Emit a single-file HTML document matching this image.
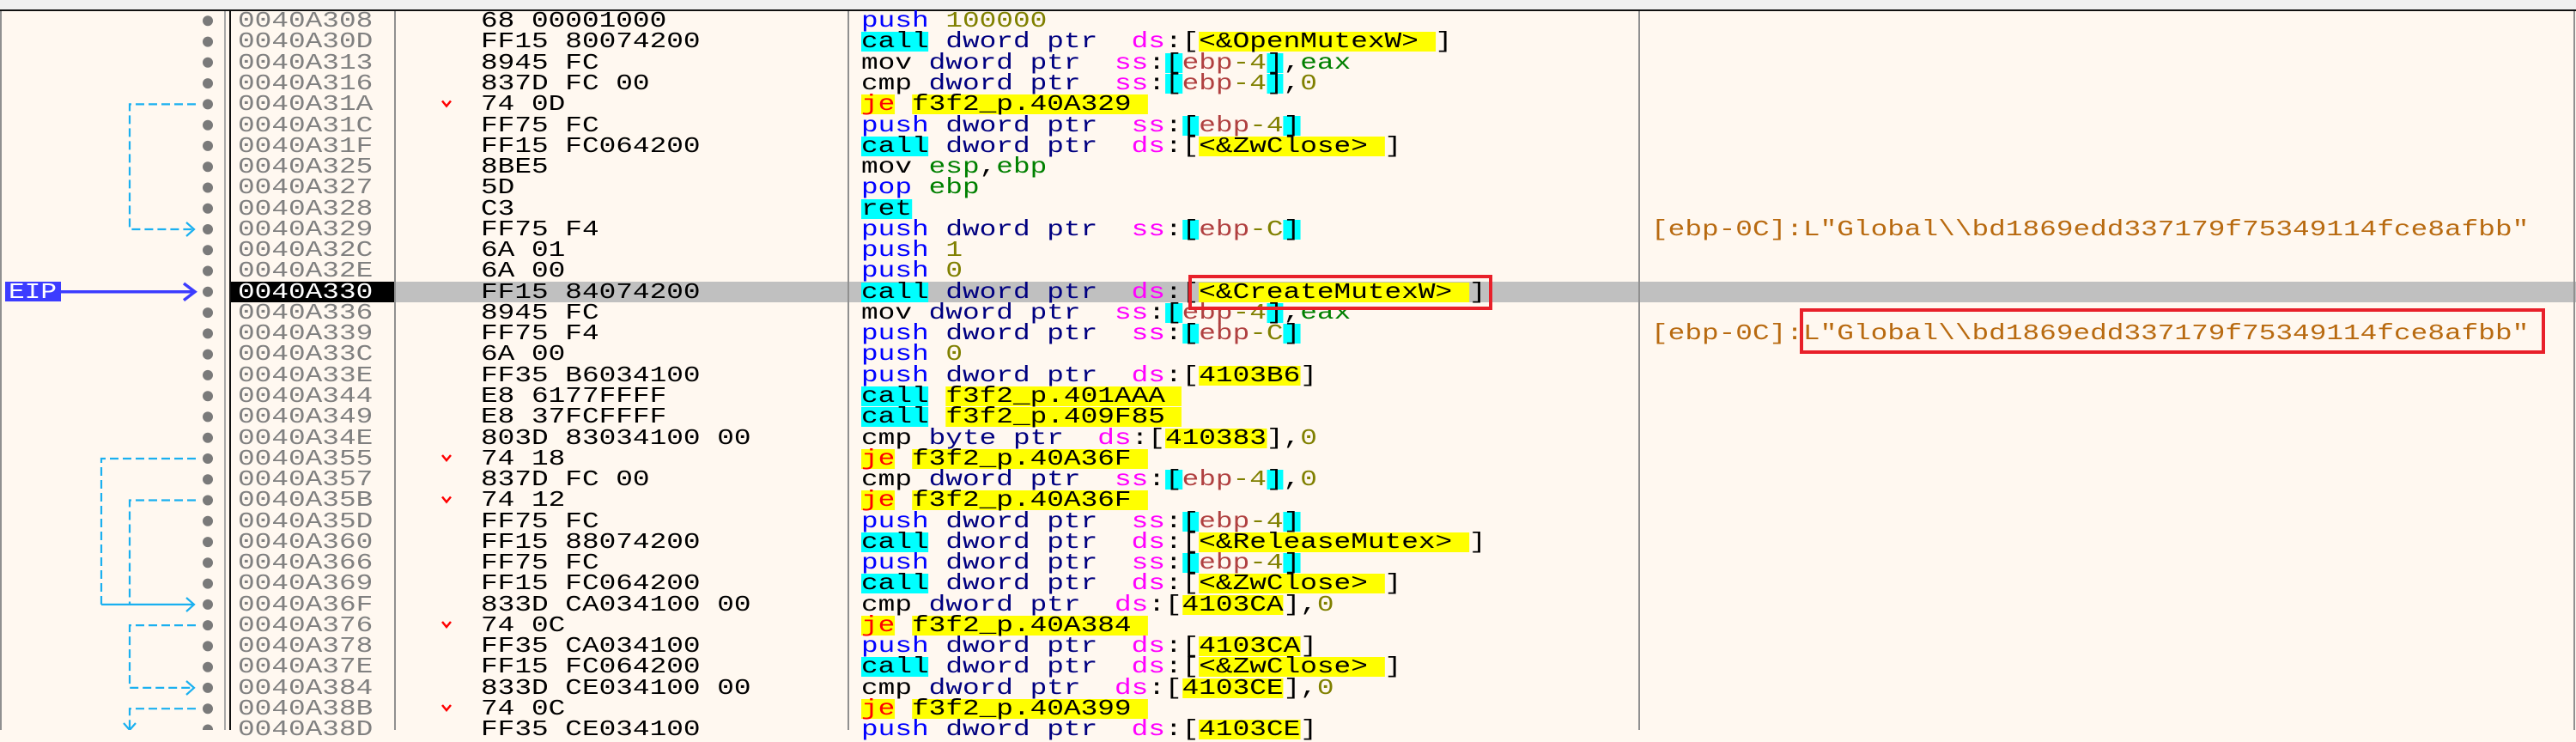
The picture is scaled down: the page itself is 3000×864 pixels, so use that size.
<!DOCTYPE html>
<html><head><meta charset="utf-8"><style>
html,body{margin:0;padding:0;width:3000px;height:850px;overflow:hidden;background:#fff8f0;}
#top{position:absolute;left:0;top:0;width:3000px;height:11px;background:#f0f0f0;border-bottom:2px solid #111;}
.rows{position:absolute;left:0;top:12.2px;width:3000px;}
.r{position:relative;height:24.27px;width:3000px;}
.r span.a,.r span.b,.r span.m,.r span.c{position:absolute;top:0;white-space:pre;font-family:"Liberation Mono",monospace;font-size:26px;line-height:24.27px;transform:scaleX(1.26);transform-origin:0 0;}
.a{left:277px;color:#808080;}
.b{left:560px;color:#000;}
.m{left:1003px;color:#000;}
.c{left:1923px;color:#b86a10;}
.cy{background:#00ffff;display:inline-block;height:23px;vertical-align:top;margin-top:1px;line-height:22px;}
.y{background:#ffff00;display:inline-block;height:23px;vertical-align:top;margin-top:1px;line-height:22px;}
.bl{color:#0000ff}.n{color:#000080}.mg{color:#ff00ff}.e{color:#b04040}.o{color:#808000}.g{color:#008000}.rd{color:#ff0000}
svg{position:absolute;left:0;top:0;}
</style></head><body>
<div id="top"></div>
<div style="position:absolute;left:460px;top:327.7px;width:2540px;height:24.3px;background:#c0c0c0"></div>
<div style="position:absolute;left:269px;top:327.7px;width:191px;height:24.3px;background:#000"></div>
<div class="rows">
<div class="r"><span class="a">0040A308</span><span class="b">68 00001000</span><span class="m"><span class="bl">push</span> <span class="o">100000</span></span></div>
<div class="r"><span class="a">0040A30D</span><span class="b">FF15 80074200</span><span class="m"><span class="cy">call</span> <span class="n">dword ptr</span>  <span class="mg">ds</span>:[<span class="y">&lt;&amp;OpenMutexW&gt; </span>]</span></div>
<div class="r"><span class="a">0040A313</span><span class="b">8945 FC</span><span class="m">mov <span class="n">dword ptr</span>  <span class="mg">ss</span>:<span class="cy">[</span><span class="e">ebp</span><span class="o">-4</span><span class="cy">]</span>,<span class="g">eax</span></span></div>
<div class="r"><span class="a">0040A316</span><span class="b">837D FC 00</span><span class="m">cmp <span class="n">dword ptr</span>  <span class="mg">ss</span>:<span class="cy">[</span><span class="e">ebp</span><span class="o">-4</span><span class="cy">]</span>,<span class="o">0</span></span></div>
<div class="r"><span class="a">0040A31A</span><span class="b">74 0D</span><span class="m"><span class="y rd">je</span> <span class="y">f3f2_p.40A329 </span></span></div>
<div class="r"><span class="a">0040A31C</span><span class="b">FF75 FC</span><span class="m"><span class="bl">push</span> <span class="n">dword ptr</span>  <span class="mg">ss</span>:<span class="cy">[</span><span class="e">ebp</span><span class="o">-4</span><span class="cy">]</span></span></div>
<div class="r"><span class="a">0040A31F</span><span class="b">FF15 FC064200</span><span class="m"><span class="cy">call</span> <span class="n">dword ptr</span>  <span class="mg">ds</span>:[<span class="y">&lt;&amp;ZwClose&gt; </span>]</span></div>
<div class="r"><span class="a">0040A325</span><span class="b">8BE5</span><span class="m">mov <span class="g">esp</span>,<span class="g">ebp</span></span></div>
<div class="r"><span class="a">0040A327</span><span class="b">5D</span><span class="m"><span class="bl">pop</span> <span class="g">ebp</span></span></div>
<div class="r"><span class="a">0040A328</span><span class="b">C3</span><span class="m"><span class="cy">ret</span></span></div>
<div class="r"><span class="a">0040A329</span><span class="b">FF75 F4</span><span class="m"><span class="bl">push</span> <span class="n">dword ptr</span>  <span class="mg">ss</span>:<span class="cy">[</span><span class="e">ebp</span><span class="o">-C</span><span class="cy">]</span></span><span class="c">[ebp-0C]:L"Global\\bd1869edd337179f75349114fce8afbb"</span></div>
<div class="r"><span class="a">0040A32C</span><span class="b">6A 01</span><span class="m"><span class="bl">push</span> <span class="o">1</span></span></div>
<div class="r"><span class="a">0040A32E</span><span class="b">6A 00</span><span class="m"><span class="bl">push</span> <span class="o">0</span></span></div>
<div class="r"><span class="a" style="color:#fff">0040A330</span><span class="b">FF15 84074200</span><span class="m"><span class="cy">call</span> <span class="n">dword ptr</span>  <span class="mg">ds</span>:[<span class="y">&lt;&amp;CreateMutexW&gt; </span>]</span></div>
<div class="r"><span class="a">0040A336</span><span class="b">8945 FC</span><span class="m">mov <span class="n">dword ptr</span>  <span class="mg">ss</span>:<span class="cy">[</span><span class="e">ebp</span><span class="o">-4</span><span class="cy">]</span>,<span class="g">eax</span></span></div>
<div class="r"><span class="a">0040A339</span><span class="b">FF75 F4</span><span class="m"><span class="bl">push</span> <span class="n">dword ptr</span>  <span class="mg">ss</span>:<span class="cy">[</span><span class="e">ebp</span><span class="o">-C</span><span class="cy">]</span></span><span class="c">[ebp-0C]:L"Global\\bd1869edd337179f75349114fce8afbb"</span></div>
<div class="r"><span class="a">0040A33C</span><span class="b">6A 00</span><span class="m"><span class="bl">push</span> <span class="o">0</span></span></div>
<div class="r"><span class="a">0040A33E</span><span class="b">FF35 B6034100</span><span class="m"><span class="bl">push</span> <span class="n">dword ptr</span>  <span class="mg">ds</span>:[<span class="y">4103B6</span>]</span></div>
<div class="r"><span class="a">0040A344</span><span class="b">E8 6177FFFF</span><span class="m"><span class="cy">call</span> <span class="y">f3f2_p.401AAA </span></span></div>
<div class="r"><span class="a">0040A349</span><span class="b">E8 37FCFFFF</span><span class="m"><span class="cy">call</span> <span class="y">f3f2_p.409F85 </span></span></div>
<div class="r"><span class="a">0040A34E</span><span class="b">803D 83034100 00</span><span class="m">cmp <span class="n">byte ptr</span>  <span class="mg">ds</span>:[<span class="y">410383</span>],<span class="o">0</span></span></div>
<div class="r"><span class="a">0040A355</span><span class="b">74 18</span><span class="m"><span class="y rd">je</span> <span class="y">f3f2_p.40A36F </span></span></div>
<div class="r"><span class="a">0040A357</span><span class="b">837D FC 00</span><span class="m">cmp <span class="n">dword ptr</span>  <span class="mg">ss</span>:<span class="cy">[</span><span class="e">ebp</span><span class="o">-4</span><span class="cy">]</span>,<span class="o">0</span></span></div>
<div class="r"><span class="a">0040A35B</span><span class="b">74 12</span><span class="m"><span class="y rd">je</span> <span class="y">f3f2_p.40A36F </span></span></div>
<div class="r"><span class="a">0040A35D</span><span class="b">FF75 FC</span><span class="m"><span class="bl">push</span> <span class="n">dword ptr</span>  <span class="mg">ss</span>:<span class="cy">[</span><span class="e">ebp</span><span class="o">-4</span><span class="cy">]</span></span></div>
<div class="r"><span class="a">0040A360</span><span class="b">FF15 88074200</span><span class="m"><span class="cy">call</span> <span class="n">dword ptr</span>  <span class="mg">ds</span>:[<span class="y">&lt;&amp;ReleaseMutex&gt; </span>]</span></div>
<div class="r"><span class="a">0040A366</span><span class="b">FF75 FC</span><span class="m"><span class="bl">push</span> <span class="n">dword ptr</span>  <span class="mg">ss</span>:<span class="cy">[</span><span class="e">ebp</span><span class="o">-4</span><span class="cy">]</span></span></div>
<div class="r"><span class="a">0040A369</span><span class="b">FF15 FC064200</span><span class="m"><span class="cy">call</span> <span class="n">dword ptr</span>  <span class="mg">ds</span>:[<span class="y">&lt;&amp;ZwClose&gt; </span>]</span></div>
<div class="r"><span class="a">0040A36F</span><span class="b">833D CA034100 00</span><span class="m">cmp <span class="n">dword ptr</span>  <span class="mg">ds</span>:[<span class="y">4103CA</span>],<span class="o">0</span></span></div>
<div class="r"><span class="a">0040A376</span><span class="b">74 0C</span><span class="m"><span class="y rd">je</span> <span class="y">f3f2_p.40A384 </span></span></div>
<div class="r"><span class="a">0040A378</span><span class="b">FF35 CA034100</span><span class="m"><span class="bl">push</span> <span class="n">dword ptr</span>  <span class="mg">ds</span>:[<span class="y">4103CA</span>]</span></div>
<div class="r"><span class="a">0040A37E</span><span class="b">FF15 FC064200</span><span class="m"><span class="cy">call</span> <span class="n">dword ptr</span>  <span class="mg">ds</span>:[<span class="y">&lt;&amp;ZwClose&gt; </span>]</span></div>
<div class="r"><span class="a">0040A384</span><span class="b">833D CE034100 00</span><span class="m">cmp <span class="n">dword ptr</span>  <span class="mg">ds</span>:[<span class="y">4103CE</span>],<span class="o">0</span></span></div>
<div class="r"><span class="a">0040A38B</span><span class="b">74 0C</span><span class="m"><span class="y rd">je</span> <span class="y">f3f2_p.40A399 </span></span></div>
<div class="r"><span class="a">0040A38D</span><span class="b">FF35 CE034100</span><span class="m"><span class="bl">push</span> <span class="n">dword ptr</span>  <span class="mg">ds</span>:[<span class="y">4103CE</span>]</span></div>
</div>
<svg width="3000" height="850" viewBox="0 0 3000 850">
<g stroke-width="2">
<line x1="1" y1="13" x2="1" y2="850" stroke="#909090"/>
<line x1="262" y1="13" x2="262" y2="850" stroke="#a8a8a8"/>
<line x1="268" y1="13" x2="268" y2="850" stroke="#111"/>
<line x1="460" y1="13" x2="460" y2="850" stroke="#909090"/>
<line x1="988" y1="13" x2="988" y2="850" stroke="#909090"/>
<line x1="1909" y1="13" x2="1909" y2="850" stroke="#909090"/>
<line x1="2998" y1="13" x2="2998" y2="850" stroke="#909090"/>
</g>
<g fill="#7a7a7a">
<circle cx="242" cy="24.3" r="6"/><circle cx="242" cy="48.6" r="6"/><circle cx="242" cy="72.8" r="6"/><circle cx="242" cy="97.1" r="6"/><circle cx="242" cy="121.4" r="6"/><circle cx="242" cy="145.7" r="6"/><circle cx="242" cy="169.9" r="6"/><circle cx="242" cy="194.2" r="6"/><circle cx="242" cy="218.5" r="6"/><circle cx="242" cy="242.7" r="6"/><circle cx="242" cy="267.0" r="6"/><circle cx="242" cy="291.3" r="6"/><circle cx="242" cy="315.5" r="6"/><circle cx="242" cy="339.8" r="6"/><circle cx="242" cy="364.1" r="6"/><circle cx="242" cy="388.4" r="6"/><circle cx="242" cy="412.6" r="6"/><circle cx="242" cy="436.9" r="6"/><circle cx="242" cy="461.2" r="6"/><circle cx="242" cy="485.4" r="6"/><circle cx="242" cy="509.7" r="6"/><circle cx="242" cy="534.0" r="6"/><circle cx="242" cy="558.2" r="6"/><circle cx="242" cy="582.5" r="6"/><circle cx="242" cy="606.8" r="6"/><circle cx="242" cy="631.1" r="6"/><circle cx="242" cy="655.3" r="6"/><circle cx="242" cy="679.6" r="6"/><circle cx="242" cy="703.9" r="6"/><circle cx="242" cy="728.1" r="6"/><circle cx="242" cy="752.4" r="6"/><circle cx="242" cy="776.7" r="6"/><circle cx="242" cy="800.9" r="6"/><circle cx="242" cy="825.2" r="6"/><circle cx="242" cy="849.5" r="6"/>
</g>
<g stroke="#1ab0f0" stroke-width="2.2" fill="none">
<path d="M228 121.4 H151 V267 H226" stroke-dasharray="10 5"/>
<path d="M217 259 L226 267 L217 275"/>
<path d="M228 534 H118 V703.9" stroke-dasharray="10 5"/>
<path d="M228 582.5 H151 V703.9" stroke-dasharray="10 5"/>
<path d="M118 703.9 H226"/>
<path d="M217 696 L226 703.9 L217 712"/>
<path d="M228 728.1 H151 V800.9 H226" stroke-dasharray="10 5"/>
<path d="M217 793 L226 800.9 L217 809"/>
<path d="M228 825.2 H151 V850" stroke-dasharray="10 5"/>
<path d="M144 842 L151 850 L158 842"/>
</g>
<g stroke="#ff0000" stroke-width="2.5" fill="none">
<path d="M515 117.5 L520 123.5 L525 117.5"/>
<path d="M515 530 L520 536 L525 530"/>
<path d="M515 578.5 L520 584.5 L525 578.5"/>
<path d="M515 724 L520 730 L525 724"/>
<path d="M515 821 L520 827 L525 821"/>
</g>
<rect x="6" y="328" width="65" height="23" fill="#3c3cff"/>
<text x="10" y="347" fill="#fff" font-family="Liberation Mono, monospace" font-size="26" textLength="56" lengthAdjust="spacingAndGlyphs">EIP</text>
<line x1="71" y1="339.8" x2="226" y2="339.8" stroke="#3c3cff" stroke-width="3.5"/>
<path d="M214 330 L227 339.8 L214 349.6" stroke="#3c3cff" stroke-width="3.5" fill="none"/>
<rect x="1386" y="322" width="350" height="37" fill="none" stroke="#e8202a" stroke-width="4"/>
<rect x="2098" y="361" width="864" height="49" fill="none" stroke="#e8202a" stroke-width="4"/>
</svg>
</body></html>
